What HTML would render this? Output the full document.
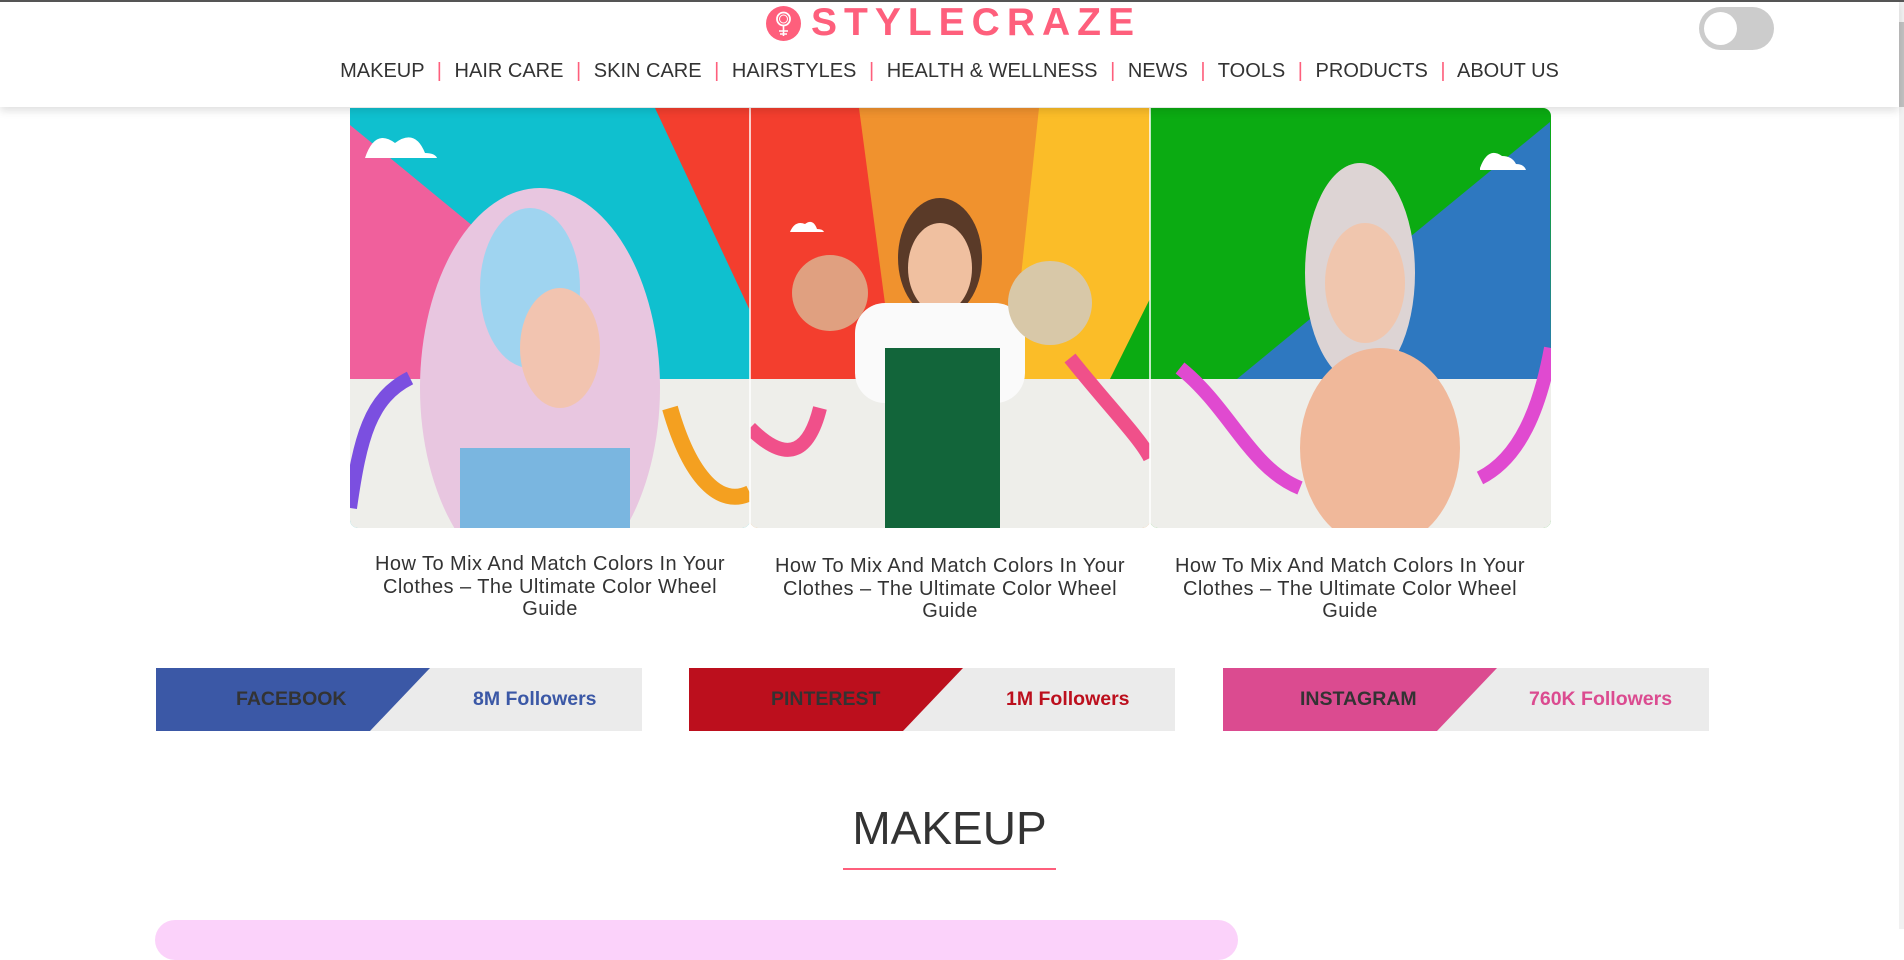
<!DOCTYPE html>
<html><head><meta charset="utf-8">
<style>
*{margin:0;padding:0;box-sizing:border-box}
html,body{width:1904px;height:929px;overflow:hidden;background:#fff;font-family:"Liberation Sans",Arial,sans-serif;color:#333}
.topline{position:absolute;left:0;top:0;width:1904px;height:2px;background:#555;z-index:5}
header{position:absolute;left:0;top:0;width:1899px;height:107px;background:#fff;box-shadow:0 4px 8px rgba(0,0,0,.12);z-index:3}
.logo{position:absolute;left:766px;top:3px;height:40px;display:flex;align-items:center}
.logo .ic{width:35px;height:35px;border-radius:50%;background:#fe5f7c;position:relative}
.logo .txt{margin-left:10px;font-size:39px;letter-spacing:7px;color:#fe5f7c;line-height:40px;font-weight:700}
nav{position:absolute;left:0;width:1899px;top:60px;text-align:center;font-size:20px;color:#333;white-space:nowrap}
nav span.s{color:#fe5f7c;margin:0 7px}
.toggle{position:absolute;left:1699px;top:7px;width:75px;height:43px;border-radius:22px;background:#ccc}
.toggle i{position:absolute;left:5px;top:5px;width:33px;height:33px;border-radius:50%;background:#fff}
.sb{position:absolute;left:1899px;top:2px;width:5px;height:927px;background:#f1f1f1}
.sb i{position:absolute;left:0;top:20px;width:5px;height:85px;background:#c1c1c1}
.hero{position:absolute;left:350px;top:108px}
.cap{position:absolute;top:553px;width:360px;text-align:center;font-size:20px;letter-spacing:0.45px;line-height:22.5px;color:#333}
.soc{position:absolute;top:668px;width:486px;height:63px;background:#ebebeb;overflow:hidden}
.soc .c{position:absolute;left:0;top:0;height:63px;width:500px}
.soc b{position:absolute;top:0;line-height:63px;font-size:19.5px;font-weight:700}
h2{position:absolute;left:0;width:1899px;top:800px;text-align:center;font-size:46px;font-weight:400;color:#333;line-height:56px}
.ul{position:absolute;left:843px;top:868px;width:213px;height:2px;background:#fe5f7c}
.card{position:absolute;left:155px;top:920px;width:1083px;height:40px;border-radius:20px;background:#fbd2fa}
</style></head><body>
<div class="topline"></div>
<header>
 <div class="logo"><div class="ic"><svg width="35" height="35" viewBox="0 0 35 35"><circle cx="17.5" cy="13" r="6.5" fill="none" stroke="#fff" stroke-width="1.8"/><circle cx="17.5" cy="13" r="4" fill="none" stroke="#fff" stroke-width="1"/><path d="M17.5 19.5V30M13 25h9M14 28h7" stroke="#fff" stroke-width="1.6" fill="none"/></svg></div><div class="txt">STYLECRAZE</div></div>
 <nav>MAKEUP <span class="s">|</span> HAIR CARE <span class="s">|</span> SKIN CARE <span class="s">|</span> HAIRSTYLES <span class="s">|</span> HEALTH &amp; WELLNESS <span class="s">|</span> NEWS <span class="s">|</span> TOOLS <span class="s">|</span> PRODUCTS <span class="s">|</span> ABOUT US</nav>
 <div class="toggle"><i></i></div>
</header>
<div class="sb"><i></i></div>

<svg class="hero" width="1201" height="421" viewBox="0 0 1201 421">
 <defs>
  <clipPath id="p1"><path d="M0 0H400V412a8 8 0 0 1-8 8H8a8 8 0 0 1-8-8Z"/></clipPath>
  <clipPath id="p2"><path d="M400 0H800V412a8 8 0 0 1-8 8H408a8 8 0 0 1-8-8Z"/></clipPath>
  <clipPath id="p3"><path d="M800 0H1193a8 8 0 0 1 8 8V412a8 8 0 0 1-8 8H808a8 8 0 0 1-8-8Z"/></clipPath>
 </defs>
 <g clip-path="url(#p1)">
  <rect width="400" height="421" fill="#0fc0cf"/>
  <polygon points="0,17 309,271 0,271" fill="#f0609c"/>
  <polygon points="305,0 400,0 400,271 432,271" fill="#f33e2e"/>
  <rect y="271" width="400" height="150" fill="#eeeeea"/>
  <path d="M0 400 C10 330 20 290 60 270" stroke="#7b4fe0" stroke-width="14" fill="none"/>
  <path d="M320 300 C340 370 370 400 400 385" stroke="#f4a020" stroke-width="16" fill="none"/>
  <ellipse cx="190" cy="280" rx="120" ry="200" fill="#e8c6e0"/>
  <ellipse cx="180" cy="180" rx="50" ry="80" fill="#9fd4f0"/>
  <ellipse cx="210" cy="240" rx="40" ry="60" fill="#f2c4b0"/>
  <rect x="110" y="340" width="170" height="90" fill="#7ab6e0"/>
  <path d="M15 50q10-30 30-15q20-15 30 10q10 0 12 5H15Z" fill="#fff"/>
 </g>
 <g clip-path="url(#p2)">
  <rect x="400" width="400" height="421" fill="#f0922e"/>
  <polygon points="400,0 509,0 545,271 400,271" fill="#f33e2e"/>
  <polygon points="689,0 895,0 760,271 660,271" fill="#fbbd28"/>
  <polygon points="895,0 1000,0 800,271 760,271" fill="#0bab12"/>
  <rect x="400" y="271" width="400" height="150" fill="#eeeeea"/>
  <path d="M400 320 C440 360 460 340 470 300 M720 250 C760 300 790 330 800 350" stroke="#f0508a" stroke-width="14" fill="none"/>
  <ellipse cx="590" cy="150" rx="42" ry="60" fill="#5a3a28"/>
  <ellipse cx="590" cy="160" rx="32" ry="45" fill="#f0c0a0"/>
  <rect x="505" y="195" width="170" height="100" rx="30" fill="#fafafa"/>
  <rect x="535" y="240" width="115" height="181" fill="#12653a"/>
  <circle cx="480" cy="185" r="38" fill="#e0a080"/>
  <circle cx="700" cy="195" r="42" fill="#d8c8a8"/>
  <path d="M440 124q5-12 15-8q8-6 12 5q6 0 7 3H440Z" fill="#fff"/>
 </g>
 <g clip-path="url(#p3)">
  <rect x="800" width="401" height="421" fill="#0bab12"/>
  <polygon points="1200,14 1201,271 887,271" fill="#2e78c0"/>
  <rect x="800" y="271" width="401" height="150" fill="#eeeeea"/>
  <path d="M830 260 C880 300 900 360 950 380 M1130 370 C1170 350 1190 300 1201 240" stroke="#e04ad0" stroke-width="14" fill="none"/>
  <ellipse cx="1010" cy="165" rx="55" ry="110" fill="#ddd4d4"/>
  <ellipse cx="1015" cy="175" rx="40" ry="60" fill="#f0c6ae"/>
  <ellipse cx="1030" cy="340" rx="80" ry="100" fill="#f0b89a"/>
  <path d="M1130 60q8-22 22-12q10 0 14 8q8 0 10 6H1130Z" fill="#fff"/>
 </g>
 <path d="M400 0V421M800 0V421" stroke="#fff" stroke-width="1.5"/>
</svg>

<div class="cap" style="left:370px">How To Mix And Match Colors In Your Clothes – The Ultimate Color Wheel Guide</div>
<div class="cap" style="left:770px;top:555px">How To Mix And Match Colors In Your Clothes – The Ultimate Color Wheel Guide</div>
<div class="cap" style="left:1170px;top:555px">How To Mix And Match Colors In Your Clothes – The Ultimate Color Wheel Guide</div>

<div class="soc" style="left:156px"><svg class="c" viewBox="0 0 500 63"><polygon points="0,0 274,0 214,63 0,63" fill="#3b58a6"/></svg><b style="left:80px;color:#333">FACEBOOK</b><b style="left:317px;color:#3b58a6">8M Followers</b></div>
<div class="soc" style="left:689px"><svg class="c" viewBox="0 0 500 63"><polygon points="0,0 274,0 214,63 0,63" fill="#bc0f1d"/></svg><b style="left:82px;color:#333">PINTEREST</b><b style="left:317px;color:#bc0f1d">1M Followers</b></div>
<div class="soc" style="left:1223px"><svg class="c" viewBox="0 0 500 63"><polygon points="0,0 274,0 214,63 0,63" fill="#db4b90"/></svg><b style="left:77px;color:#333">INSTAGRAM</b><b style="left:306px;color:#db4b90">760K Followers</b></div>

<h2>MAKEUP</h2>
<div class="ul"></div>
<div class="card"></div>
</body></html>
